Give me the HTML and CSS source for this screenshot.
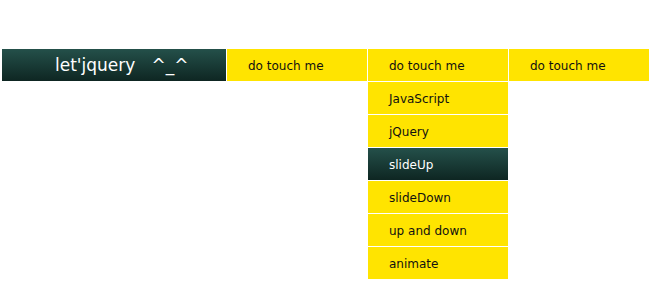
FILE: index.html
```html
<!DOCTYPE html>
<html lang="en">
<head>
  <meta charset="UTF-8">
  <title>let'jquery</title>
  <link rel="stylesheet" href="styles.css">
</head>
<body>
  <nav class="menu">
    <div class="logo">let'jquery &nbsp; ^_^</div>
    <ul class="items">
      <li class="item"><a href="#">do touch me</a></li>
      <li class="item open">
        <a href="#">do touch me</a>
        <ul class="sub">
          <li><a href="#">JavaScript</a></li>
          <li><a href="#">jQuery</a></li>
          <li class="active"><a href="#">slideUp</a></li>
          <li><a href="#">slideDown</a></li>
          <li><a href="#">up and down</a></li>
          <li><a href="#">animate</a></li>
        </ul>
      </li>
      <li class="item"><a href="#">do touch me</a></li>
    </ul>
  </nav>
</body>
</html>
```

FILE: styles.css
```css
:root {
  --clr-yellow: #ffe400;
  --clr-dark-top: #24504a;
  --clr-dark-bottom: #0e2622;
}
*, *::before, *::after {box-sizing: border-box; margin: 0; padding: 0}
body {
  background: white;
  font-family: 'DejaVu Sans', Verdana, sans-serif;
  font-size: 12px;
  min-height: 296px;
}
a {
  text-decoration: none;
  color: #111;
}
.menu {
  display: flex;
  align-items: flex-start;
  margin: 49px 0 0 2px;
}
.logo {
  width: 224px;
  height: 32px;
  background: linear-gradient(var(--clr-dark-top), var(--clr-dark-bottom));
  color: white;
  font-size: 17px;
  line-height: 32px;
  padding-left: 53px;
}
.items {
  display: flex;
  align-items: flex-start;
  list-style: none;
}
.item {
  position: relative;
  width: 140px;
  margin-left: 1px;
}
.item > a {
  display: block;
  height: 32px;
  line-height: 32px;
  padding: 1px 0 0 21px;
  background: var(--clr-yellow);
}
.sub {
  position: absolute;
  z-index: 2;
  top: 33px;
  left: 0;
  width: 140px;
  list-style: none;
}
.sub li {
  background: var(--clr-yellow);
  border-bottom: 1px solid white;
}
.sub a {
  display: block;
  height: 32px;
  line-height: 32px;
  padding: 1px 0 0 21px;
}
.sub .active {
  background: linear-gradient(var(--clr-dark-top), var(--clr-dark-bottom));
}
.sub .active a {
  color: white;
}
```
